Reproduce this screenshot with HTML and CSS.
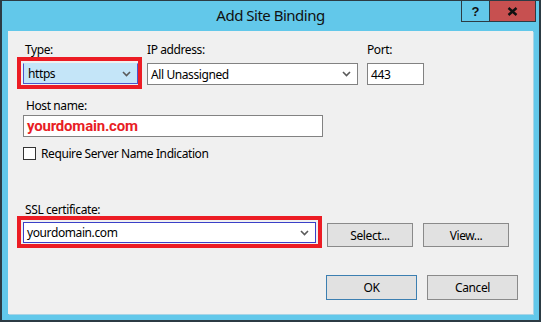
FILE: index.html
```html
<!DOCTYPE html>
<html>
<head>
<meta charset="utf-8">
<link rel="stylesheet" href="styles.css">
</head>
<body>
<div class="window">
  <div class="titlebar">
    <div class="title">Add Site Binding</div>
    <div class="caption-buttons">
      <div class="cap-btn help">?</div>
      <div class="cap-btn close">
        <svg width="11" height="9" viewBox="0 0 11 9"><path d="M1.5 1 L9.5 8 M9.5 1 L1.5 8" stroke="#111" stroke-width="2.4" fill="none"/></svg>
      </div>
    </div>
  </div>
  <div class="client">
    <div class="row-top">
      <div class="field field-type">
        <div class="label label-indent">Type:</div>
        <div class="highlight hl-type">
          <div class="combo combo-type">
            <span class="combo-text">https</span>
            <svg class="chev" width="9" height="6" viewBox="0 0 9 6"><path d="M1 1 L4.5 4.5 L8 1" stroke="#5a5a5a" stroke-width="1.6" fill="none"/></svg>
          </div>
        </div>
      </div>
      <div class="field field-ip">
        <div class="label label-ctl">IP address:</div>
        <div class="combo combo-ip">
          <span class="combo-text">All Unassigned</span>
          <svg class="chev" width="9" height="6" viewBox="0 0 9 6"><path d="M1 1 L4.5 4.5 L8 1" stroke="#5a5a5a" stroke-width="1.6" fill="none"/></svg>
        </div>
      </div>
      <div class="field field-port">
        <div class="label label-ctl">Port:</div>
        <div class="textbox port"><span class="combo-text">443</span></div>
      </div>
    </div>
    <div class="field field-host">
      <div class="label label-host">Host name:</div>
      <div class="textbox host"><span class="host-text">yourdomain.com</span></div>
    </div>
    <div class="checkrow">
      <span class="checkbox"></span>
      <span class="check-label">Require Server Name Indication</span>
    </div>
    <div class="field field-ssl">
      <div class="label label-indent label-ssl">SSL certificate:</div>
      <div class="ssl-row">
        <div class="highlight hl-ssl">
          <div class="combo combo-ssl">
            <span class="combo-text">yourdomain.com</span>
            <svg class="chev" width="9" height="6" viewBox="0 0 9 6"><path d="M1 1 L4.5 4.5 L8 1" stroke="#5a5a5a" stroke-width="1.6" fill="none"/></svg>
          </div>
        </div>
        <div class="btn btn-select">Select...</div>
        <div class="btn btn-view">View...</div>
      </div>
    </div>
    <div class="actions">
      <div class="btn btn-ok">OK</div>
      <div class="btn btn-cancel">Cancel</div>
    </div>
  </div>
</div>
</body>
</html>
```

FILE: styles.css
```css
* { box-sizing: border-box; }
html, body { margin: 0; padding: 0; }
body {
  width: 541px;
  height: 322px;
  overflow: hidden;
  font-family: "Noto Sans", "Open Sans", sans-serif;
  font-size: 12px;
  letter-spacing: -0.4px;
  color: #000;
}
.window {
  width: 541px;
  height: 322px;
  background: #62c8ea;
  border: 2px solid #2c3b44;
  border-top-width: 1px;
  display: flex;
  flex-direction: column;
  padding: 0 6px 6px 6px;
}
.titlebar {
  height: 30px;
  margin: 0 -6px;
  display: grid;
  grid-template-columns: 1fr auto 1fr;
  align-items: start;
}
.title {
  grid-column: 2;
  font-size: 15px;
  letter-spacing: -0.5px;
  line-height: 20px;
  padding-top: 4px;
  color: #111;
}
.caption-buttons {
  grid-column: 3;
  justify-self: end;
  display: flex;
  margin-top: -1px;
  margin-right: 3px;
}
.cap-btn {
  height: 22px;
  border: 1px solid #2c3b44;
  display: flex;
  align-items: center;
  justify-content: center;
}
.help {
  width: 28px;
  border-right: none;
  font-family: "Liberation Sans", sans-serif;
  font-weight: bold;
  font-size: 13px;
  letter-spacing: 0;
  color: #111;
}
.close {
  width: 47px;
  background: #c75050;
}
.client {
  flex: 1;
  background: #f0f0f0;
  box-shadow: 1px 1px 0 #a8d4e6;
}
.label {
  height: 14px;
  line-height: 14px;
  white-space: nowrap;
}
.row-top {
  display: flex;
  align-items: flex-start;
  margin-top: 12px;
}
.field-type { margin-left: 9px; }
.label-indent { padding-left: 8px; }
.highlight {
  border: 4px solid #ec1c24;
}
.hl-type {
  width: 125px;
  height: 32px;
  padding: 2px 0 1px 2px;
}
.combo {
  display: flex;
  align-items: center;
  justify-content: space-between;
  height: 100%;
  padding: 0 6px 0 3px;
  white-space: nowrap;
}
.combo-type {
  background: #c4e5f8;
  border: 1px solid #4b55cc;
  border-top-color: #c4e5f8;
  padding-left: 4px;
}
.chev { flex: none; }
.field-ip { margin-left: 5px; }
.label-ctl { margin-bottom: 6px; }
.combo-ip {
  width: 211px;
  height: 22px;
  background: #fff;
  border: 1px solid #828282;
}
.field-port { margin-left: 9px; }
.textbox {
  background: #fff;
  border: 1px solid #828282;
  display: flex;
  align-items: center;
  padding-left: 3px;
}
.port {
  width: 57px;
  height: 22px;
}
.field-host {
  margin-top: 10px;
  margin-left: 15px;
}
.label-host {
  padding-left: 3px;
  margin-bottom: 2px;
}
.host {
  width: 300px;
  height: 22px;
}
.host-text {
  font-family: Roboto, "Noto Sans", sans-serif;
  color: #e81d25;
  font-weight: bold;
  font-size: 15px;
  letter-spacing: -0.2px;
  line-height: 20px;
}
.checkrow {
  display: flex;
  align-items: flex-start;
  margin-top: 10px;
  margin-left: 15px;
}
.checkbox {
  width: 13px;
  height: 13px;
  background: #fff;
  border: 1px solid #333;
}
.check-label {
  margin-left: 5px;
  line-height: 14px;
}
.field-ssl {
  margin-top: 42px;
  margin-left: 9px;
}
.label-ssl { margin-bottom: -1px; }
.ssl-row {
  display: flex;
  align-items: flex-start;
}
.hl-ssl {
  width: 305px;
  height: 32px;
  padding: 2px 2px 1px 2px;
}
.combo-ssl {
  background: #fff;
  border: 1px solid #3a40c8;
}
.btn {
  display: flex;
  align-items: center;
  justify-content: center;
  background: #e1e1e1;
  border: 1px solid #8a8a8a;
  white-space: nowrap;
}
.btn-select {
  width: 86px;
  height: 24px;
  margin-left: 5px;
  margin-top: 7px;
}
.btn-view {
  width: 86px;
  height: 24px;
  margin-left: 10px;
  margin-top: 7px;
}
.actions {
  display: flex;
  justify-content: flex-end;
  gap: 10px;
  margin-top: 27px;
  padding-right: 15px;
}
.btn-ok, .btn-cancel {
  width: 91px;
  height: 25px;
}
.btn-ok { border-color: #3c7fb1; }
```
